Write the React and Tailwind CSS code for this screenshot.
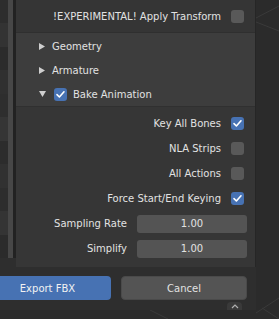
import React from "react";

const Check = ({ on }) => (
  <div
    className={`w-[13px] h-[13px] rounded-[3px] flex items-center justify-center shrink-0 ${
      on ? "bg-[#4772b3]" : "bg-[#595959]"
    }`}
  >
    {on && (
      <svg width="13" height="13" viewBox="0 0 13 13">
        <path d="M3 6.6 L5.4 9 L10 3.8" fill="none" stroke="#ffffff" strokeWidth="1.6" strokeLinecap="round" strokeLinejoin="round" />
      </svg>
    )}
  </div>
);

const Arrow = ({ open }) =>
  open ? (
    <svg width="7" height="6" viewBox="0 0 7 6" className="shrink-0">
      <polygon points="0,0 7,0 3.5,6" fill="#cfcfcf" />
    </svg>
  ) : (
    <svg width="6" height="7" viewBox="0 0 6 7" className="shrink-0">
      <polygon points="0,0 6,3.5 0,7" fill="#cfcfcf" />
    </svg>
  );

const CheckRow = ({ label, on }) => (
  <div className="h-[25px] flex items-center justify-end gap-[10px] pr-[11px]">
    <span>{label}</span>
    <Check on={on} />
  </div>
);

const FieldRow = ({ label, value }) => (
  <div className="h-[25px] flex items-center justify-end gap-[10px] pr-[8px]">
    <span>{label}</span>
    <div className="w-[110px] h-[18px] rounded-[3px] bg-[#545454] flex items-center justify-center">
      {value}
    </div>
  </div>
);

const bands = ["#2d2d2d", "#333333", "#2b2b2b", "#303030", "#2e2e2e", "#353535", "#2c2c2c", "#313131", "#2d2d2d", "#343434", "#2b2b2b"];

export default function App() {
  return (
    <div className="w-[279px] h-[319px] bg-[#2b2b2b] relative overflow-hidden font-['DejaVu_Sans',sans-serif] text-[10px] text-[#e2e2e2]">
      <svg className="absolute inset-0" width="279" height="319" viewBox="0 0 279 319">
        <g stroke="#3a3a3a" strokeWidth="1" fill="none">
          <line x1="256" y1="18" x2="279" y2="6" />
          <line x1="256" y1="22" x2="279" y2="31" />
          <line x1="256" y1="313" x2="279" y2="298" />
          <line x1="262" y1="308" x2="279" y2="319" />
          <line x1="150" y1="310" x2="168" y2="319" />
        </g>
      </svg>

      <div className="relative w-[256px] h-[310px] bg-[#2e2e2e] flex flex-col">
        <div className="flex h-[267px]">
          <div className="w-[16px] h-[258px] flex">
            <div className="w-[8px] flex flex-col">
              {bands.map((c, i) => (
                <div key={i} className="flex-1" style={{ backgroundColor: c }} />
              ))}
            </div>
            <div className="w-[5px] bg-[#474747]" />
            <div className="w-[3px] bg-[#222222]" />
          </div>

          <div className="w-[240px] flex flex-col bg-[#363636] border-r border-[#262626]">
            <div className="h-[33px] bg-[#353535] flex items-center justify-end gap-[10px] pr-[11px] border-b border-[#2f2f2f]">
              <span>!EXPERIMENTAL! Apply Transform</span>
              <Check on={false} />
            </div>

            <div className="bg-[#3d3d3d] pt-[1px] border-b border-[#303030]">
              <div className="h-[24px] flex items-center pl-[23px] gap-[7px]">
                <Arrow />
                <span>Geometry</span>
              </div>
              <div className="h-[24px] flex items-center pl-[23px] gap-[7px]">
                <Arrow />
                <span>Armature</span>
              </div>
              <div className="h-[24px] flex items-center pl-[23px]">
                <Arrow open />
                <div className="ml-[8px] mr-[6px]">
                  <Check on />
                </div>
                <span>Bake Animation</span>
              </div>
            </div>

            <div className="pt-[4px] flex flex-col">
              <CheckRow label="Key All Bones" on />
              <CheckRow label="NLA Strips" on={false} />
              <CheckRow label="All Actions" on={false} />
              <CheckRow label="Force Start/End Keying" on />
              <FieldRow label="Sampling Rate" value="1.00" />
              <FieldRow label="Simplify" value="1.00" />
            </div>
          </div>
        </div>

        <div className="flex-1 relative flex items-start pt-[9px] gap-[10px]">
          <div className="-ml-[16px] w-[127px] h-[24px] rounded-[4px] bg-[#4772b3] flex items-center justify-center text-[#f2f2f2]">
            Export FBX
          </div>
          <div className="w-[126px] h-[24px] rounded-[4px] bg-[#545454] border border-[#4a4a4a] flex items-center justify-center">
            Cancel
          </div>
          <div className="absolute left-[227px] bottom-0 w-[15px] h-[8px] rounded-t-[4px] bg-[#3a3a3a] flex items-center justify-center">
            <svg width="8" height="5" viewBox="0 0 8 5">
              <path d="M1 4 L4 1 L7 4" fill="none" stroke="#b0b0b0" strokeWidth="1.2" />
            </svg>
          </div>
        </div>
      </div>
    </div>
  );
}
